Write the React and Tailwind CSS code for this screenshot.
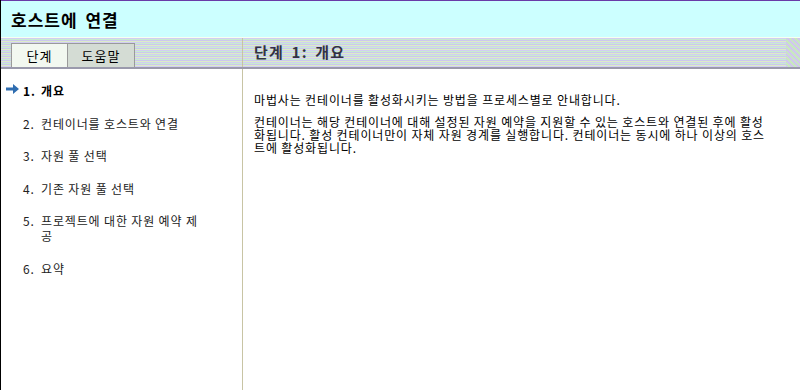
import React from 'react';

const steps = [
  { n: '1.', label: '개요', active: true },
  { n: '2.', label: '컨테이너를 호스트와 연결' },
  { n: '3.', label: '자원 풀 선택' },
  { n: '4.', label: '기존 자원 풀 선택' },
  { n: '5.', label: '프로젝트에 대한 자원 예약 제공' },
  { n: '6.', label: '요약' },
];

export default function App() {
  return (
    <div
      className="w-[800px] h-[390px] flex flex-col bg-white border-l border-black overflow-hidden text-black"
      style={{ fontFamily: '"Noto Sans CJK KR", "Noto Sans", sans-serif' }}
    >
      {/* Title bar */}
      <div className="h-[38px] shrink-0 bg-[#ccffff] border-t border-[#6a3aa8] border-b border-b-[#f8fff0] flex items-center pl-[10px]">
        <h1 className="text-[17px] font-bold leading-none tracking-[1px] [word-spacing:3px]">호스트에 연결</h1>
      </div>

      {/* Tab strip */}
      <div className="h-[31px] shrink-0 flex border-b-2 border-[#9a9aac] bg-[repeating-linear-gradient(to_bottom,#d2cef2_0px,#d2cef2_1px,#c8ecd0_1px,#c8ecd0_2px,#ccc8ee_2px,#ccc8ee_3px,#dcecc8_3px,#dcecc8_4px)]">
        <div className="w-[241px] shrink-0 flex items-end pl-[10px]">
          <div className="flex border border-b-0 border-[#9a9a9a] h-[24px] text-[13px] tracking-[1px]">
            <div className="w-[55px] flex items-center justify-center bg-[#f2f8f0]">단계</div>
            <div className="w-[67px] flex items-center justify-center bg-[#d4dcd4] border-l border-[#9a9a9a]">도움말</div>
          </div>
        </div>
        <div className="flex-1 border-l border-[#c8c4a4] flex items-center pl-[11px]">
          <span className="text-[15px] font-bold text-[#333344] tracking-[1.2px] [word-spacing:3px]">단계 1: 개요</span>
        </div>
        <div className="w-[14px] shrink-0 bg-[repeating-linear-gradient(45deg,#d0c8ec_0px,#d0c8ec_2px,#c8e8c0_2px,#c8e8c0_4px)]" />
      </div>

      {/* Body */}
      <div className="flex-1 flex">
        <nav className="w-[241px] shrink-0 pt-[14px] flex flex-col gap-[17.6px] text-[12px] leading-[15px] tracking-[0.85px]">
          {steps.map((s) => (
            <div key={s.n} className="flex items-start">
              <span className="w-[22px] shrink-0 flex justify-center pt-[1px]">
                {s.active && (
                  <svg width="13" height="10" viewBox="0 0 13 10">
                    <path d="M0 3.5h7V0l6 5-6 5V6.5H0z" fill="#2f6db0" />
                  </svg>
                )}
              </span>
              <span className={`w-[18px] shrink-0 ${s.active ? 'font-bold' : 'text-[#222]'}`}>{s.n}</span>
              <span className={`w-[164px] ${s.active ? 'font-bold' : 'text-[#222]'}`}>{s.label}</span>
            </div>
          ))}
        </nav>
        <main className="flex-1 border-l border-[#c8c4a4] pl-[11px] pr-[26px] pt-[24px] text-[12px] leading-[13px] tracking-[0.85px]">
          <p className="mb-[9px]">마법사는 컨테이너를 활성화시키는 방법을 프로세스별로 안내합니다.</p>
          <p>
            컨테이너는 해당 컨테이너에 대해 설정된 자원 예약을 지원할 수 있는 호스트와 연결된 후에 활성화됩니다. 활성
            컨테이너만이 자체 자원 경계를 실행합니다. 컨테이너는 동시에 하나 이상의 호스트에 활성화됩니다.
          </p>
        </main>
      </div>
    </div>
  );
}
